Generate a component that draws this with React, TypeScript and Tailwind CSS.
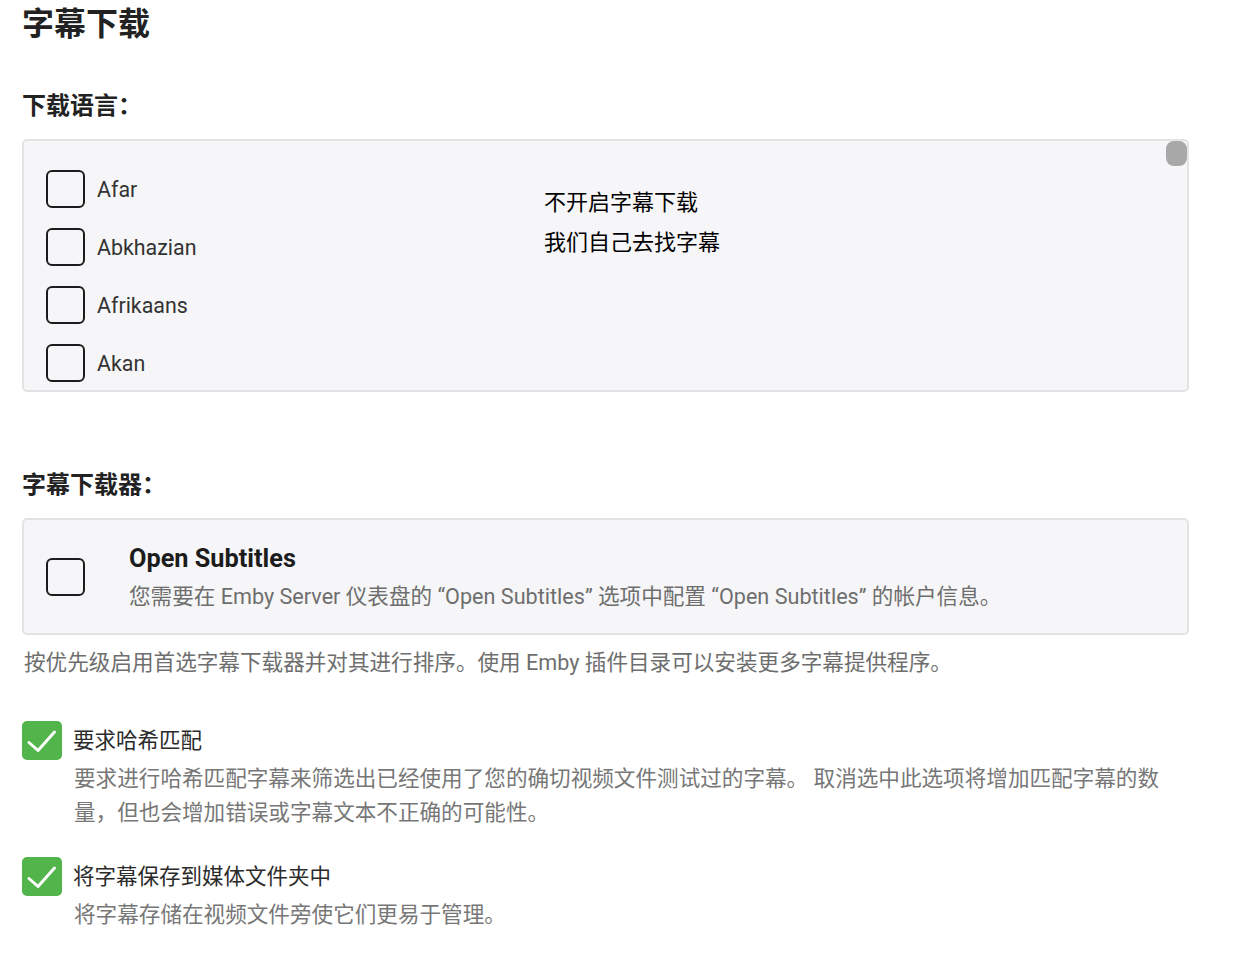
import React from "react";

const font = {
  fontFamily: 'Roboto, "Noto Sans CJK SC", sans-serif',
};

const languages = ["Afar", "Abkhazian", "Afrikaans", "Akan"];

function EmptyBox() {
  return (
    <span className="w-[39px] h-[38px] shrink-0 rounded-[6px] border-[2.5px] border-[#1c1c1c] bg-transparent" />
  );
}

function GreenCheck() {
  return (
    <span className="w-[40px] h-[39px] shrink-0 rounded-[5px] bg-[#52b54b] flex items-center justify-center">
      <svg width="40" height="39" viewBox="0 0 40 39">
        <polyline
          points="7,21.5 16,29.5 32.5,11"
          fill="none"
          stroke="#ffffff"
          strokeWidth="3"
          strokeLinecap="round"
          strokeLinejoin="round"
        />
      </svg>
    </span>
  );
}

function Option({
  label,
  desc,
}: {
  label: string;
  desc: string;
}) {
  return (
    <div>
      <label className="flex items-center gap-[11px]">
        <GreenCheck />
        <span className="text-[21.5px] leading-[34px] text-[#2b2b2b]">{label}</span>
      </label>
      <p className="mt-[2px] pl-[52px] pr-[20px] text-[21.6px] leading-[34px] text-[#777777]">
        {desc}
      </p>
    </div>
  );
}

export default function App() {
  return (
    <div className="bg-white min-h-[970px] pl-[22px] pr-[47px] pt-[4px]" style={font}>
      <h1 className="text-[32px] leading-[40px] font-bold text-[#222222]">字幕下载</h1>

      <h2 className="mt-[45px] text-[24px] leading-[34px] font-bold text-[#222222]">下载语言：</h2>

      <div className="mt-[16px] relative h-[253px] rounded-[5px] border-2 border-[#e3e3e3] bg-[#f6f6f8] overflow-hidden flex items-start">
        <div className="w-[520px] shrink-0 pl-[22px] pt-[19px]">
          {languages.map((lang) => (
            <label key={lang} className="h-[58px] flex items-center gap-[12px]">
              <EmptyBox />
              <span className="pt-[3px] text-[21.4px] text-[#333333]">{lang}</span>
            </label>
          ))}
        </div>
        <div className="pt-[42px] text-[22px] leading-[40px] text-black">
          <p>不开启字幕下载</p>
          <p>我们自己去找字幕</p>
        </div>
        <span className="absolute top-0 right-0 w-[21px] h-[25px] rounded-[8px] bg-[#a8a8a8]" />
      </div>

      <h2 className="mt-[76px] text-[24px] leading-[34px] font-bold text-[#222222]">字幕下载器：</h2>

      <div className="mt-[16px] h-[117px] rounded-[5px] border-2 border-[#e3e3e3] bg-[#f6f6f8] flex items-center pl-[22px] gap-[44px]">
        <EmptyBox />
        <div className="pt-[2px]">
          <div className="text-[25.3px] leading-[36px] font-bold text-[#1c1c1c]">Open Subtitles</div>
          <div className="mt-[2px] text-[21.6px] leading-[36px] text-[#6e6e6e]">
            您需要在 Emby Server 仪表盘的 “Open Subtitles” 选项中配置 “Open Subtitles” 的帐户信息。
          </div>
        </div>
      </div>

      <p className="mt-[11px] pl-[2px] text-[21.6px] leading-[34px] text-[#6e6e6e]">
        按优先级启用首选字幕下载器并对其进行排序。使用 Emby 插件目录可以安装更多字幕提供程序。
      </p>

      <div className="mt-[41px] flex flex-col gap-[27px]">
        <Option
          label="要求哈希匹配"
          desc="要求进行哈希匹配字幕来筛选出已经使用了您的确切视频文件测试过的字幕。 取消选中此选项将增加匹配字幕的数量，但也会增加错误或字幕文本不正确的可能性。"
        />
        <Option label="将字幕保存到媒体文件夹中" desc="将字幕存储在视频文件旁使它们更易于管理。" />
      </div>
    </div>
  );
}
